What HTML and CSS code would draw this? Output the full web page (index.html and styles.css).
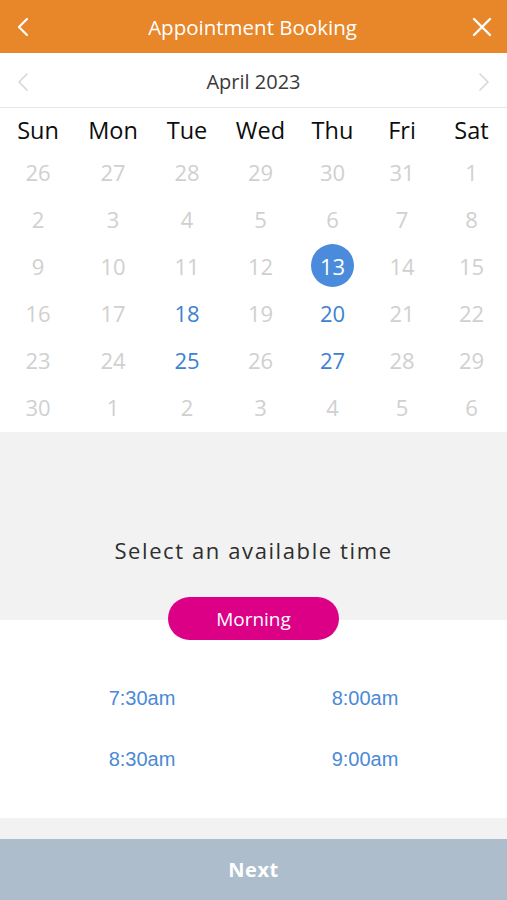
FILE: index.html
```html
<!DOCTYPE html>
<html lang="en">
<head>
  <meta charset="UTF-8">
  <meta name="viewport" content="width=device-width, initial-scale=1.0">
  <title>Appointment Booking</title>
  <link rel="stylesheet" href="styles.css">
</head>
<body>
  <div class="header">
    <button class="icon-btn back">
      <svg width="14" height="20" viewBox="0 0 14 20"><path d="M11 2 L3 10 L11 18" fill="none" stroke="#fff" stroke-width="2.2" stroke-linecap="round" stroke-linejoin="round"/></svg>
    </button>
    <div class="title">Appointment Booking</div>
    <button class="icon-btn close">
      <svg width="20" height="20" viewBox="0 0 20 20"><path d="M2 2 L18 18 M18 2 L2 18" fill="none" stroke="#fff" stroke-width="2.4" stroke-linecap="round"/></svg>
    </button>
  </div>

  <div class="month-bar">
    <button class="nav-btn">
      <svg width="12" height="20" viewBox="0 0 12 20"><path d="M10 2 L2 10 L10 18" fill="none" stroke="#d6d6d6" stroke-width="1.6" stroke-linecap="round" stroke-linejoin="round"/></svg>
    </button>
    <div class="month">April 2023</div>
    <button class="nav-btn">
      <svg width="12" height="20" viewBox="0 0 12 20"><path d="M2 2 L10 10 L2 18" fill="none" stroke="#d6d6d6" stroke-width="1.6" stroke-linecap="round" stroke-linejoin="round"/></svg>
    </button>
  </div>

  <div class="calendar">
    <div class="weekdays">
      <span>Sun</span><span>Mon</span><span>Tue</span><span>Wed</span><span>Thu</span><span>Fri</span><span>Sat</span>
    </div>
    <div class="days">
      <span>26</span><span>27</span><span>28</span><span>29</span><span>30</span><span>31</span><span>1</span>
      <span>2</span><span>3</span><span>4</span><span>5</span><span>6</span><span>7</span><span>8</span>
      <span>9</span><span>10</span><span>11</span><span>12</span><span class="selected"><b>13</b></span><span>14</span><span>15</span>
      <span>16</span><span>17</span><span class="open">18</span><span>19</span><span class="open">20</span><span>21</span><span>22</span>
      <span>23</span><span>24</span><span class="open">25</span><span>26</span><span class="open">27</span><span>28</span><span>29</span>
      <span>30</span><span>1</span><span>2</span><span>3</span><span>4</span><span>5</span><span>6</span>
    </div>
  </div>

  <div class="time-head">
    <div class="prompt">Select an available time</div>
    <div class="period">Morning</div>
  </div>

  <div class="slots">
    <a class="slot">7:30am</a>
    <a class="slot">8:00am</a>
    <a class="slot">8:30am</a>
    <a class="slot">9:00am</a>
  </div>

  <div class="spacer"></div>
  <button class="next">Next</button>
</body>
</html>
```

FILE: styles.css
```css
body {
  margin: 0;
  padding: 0;
  font-family: "Open Sans", "Noto Sans", sans-serif;
  background: #fff;
  color: #111;
  width: 507px;
  height: 900px;
  display: flex;
  flex-direction: column;
}
button {
  font-family: inherit;
  border: none;
  background: none;
  padding: 0;
  cursor: pointer;
}
.header {
  height: 53px;
  background: #e8862a;
  display: flex;
  align-items: center;
  justify-content: space-between;
  padding: 0 14px 0 12px;
}
.icon-btn {
  width: 22px;
  height: 22px;
  display: flex;
  align-items: center;
  justify-content: center;
}
.title {
  color: #fff;
  font-size: 20.5px;
  line-height: 26px;
}
.month-bar {
  height: 54px;
  border-bottom: 1px solid #e6e6e6;
  display: flex;
  align-items: center;
  justify-content: space-between;
  padding: 0 16px 0 16px;
}
.nav-btn {
  width: 14px;
  height: 22px;
  display: flex;
  align-items: center;
  justify-content: center;
  margin-top: 4px;
}
.month {
  font-size: 20px;
  color: #3a3a3a;
  line-height: 24px;
  margin-top: 3px;
}
.calendar {
  height: 324px;
}
.weekdays,
.days {
  display: grid;
  grid-template-columns: 76px 74px 74px 73px 71px 68px 71px;
  text-align: center;
}
.weekdays {
  height: 37px;
  padding-top: 3px;
  align-items: center;
  font-size: 23.5px;
  color: #0d0d0d;
}
.days {
  grid-auto-rows: 47px;
  align-items: center;
  font-size: 22px;
  color: #d0d0d0;
}
.days span {
  display: flex;
  align-items: center;
  justify-content: center;
}
.days .open {
  color: #3d82d1;
}
.days .selected b {
  font-weight: normal;
  width: 43px;
  height: 43px;
  border-radius: 50%;
  background: #4a8bdc;
  color: #fff;
  display: flex;
  align-items: center;
  justify-content: center;
}
.time-head {
  background: #f2f2f2;
  height: 188px;
  display: flex;
  flex-direction: column;
  align-items: center;
  justify-content: flex-end;
}
.prompt {
  font-size: 22px;
  letter-spacing: 1.6px;
  color: #2e2e2e;
  line-height: 28px;
  margin-bottom: 33px;
}
.period {
  width: 171px;
  height: 43px;
  border-radius: 22px;
  background: #dc0087;
  color: #fff;
  font-size: 19px;
  display: flex;
  align-items: center;
  justify-content: center;
  margin-bottom: -20px;
  position: relative;
}
.slots {
  display: grid;
  grid-template-columns: 223px 223px;
  justify-content: center;
  grid-auto-rows: 61px;
  padding-top: 66px;
  height: 132px;
  font-family: "Liberation Sans", Arial, sans-serif;
}
.slot {
  text-align: center;
  font-size: 20px;
  color: #4a8ad6;
  line-height: 24px;
}
.spacer {
  height: 21px;
  background: #f2f2f2;
}
.next {
  flex: 1;
  background: #adbdcc;
  color: #fff;
  font-weight: bold;
  font-size: 20px;
  letter-spacing: 0.5px;
}
```
